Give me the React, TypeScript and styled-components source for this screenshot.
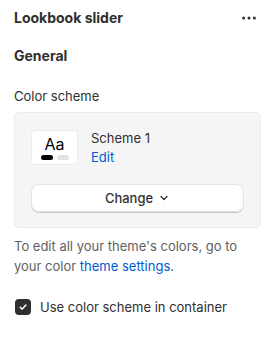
import React from "react";
import styled, { createGlobalStyle } from "styled-components";

const GlobalStyle = createGlobalStyle`
  html, body {
    margin: 0;
    padding: 0;
    background: #ffffff;
  }
  body {
    font-family: Inter, "Noto Sans", sans-serif;
    color: #303030;
    -webkit-font-smoothing: antialiased;
  }
`;

const Panel = styled.div`
  width: 275px;
  box-sizing: border-box;
  padding: 8px 14px 0 14px;
`;

const Header = styled.div`
  display: flex;
  align-items: center;
  justify-content: space-between;
  height: 20px;
`;

const Title = styled.h1`
  margin: 0;
  font-size: 14px;
  font-weight: 650;
  line-height: 20px;
`;

const MoreButton = styled.button`
  display: flex;
  align-items: center;
  justify-content: center;
  width: 14px;
  height: 20px;
  margin-right: 5px;
  padding: 0;
  border: none;
  background: none;
  color: #303030;
`;

const SectionTitle = styled.h2`
  margin: 18px 0 0 0;
  font-size: 14px;
  font-weight: 650;
  line-height: 20px;
`;

const FieldLabel = styled.div`
  margin-top: 20px;
  font-size: 13px;
  line-height: 20px;
  color: #303030;
`;

const Card = styled.div`
  margin-top: 6px;
  width: 247px;
  box-sizing: border-box;
  padding: 17px 16px 15px 16px;
  background: #f5f5f5;
  border: 1px solid #ebebeb;
  border-radius: 5px;
  display: flex;
  flex-direction: column;
  gap: 19px;
`;

const SchemeRow = styled.div`
  display: flex;
  align-items: center;
  gap: 13px;
  height: 35px;
`;

const Swatch = styled.div`
  width: 47px;
  height: 35px;
  box-sizing: border-box;
  background: #ffffff;
  border: 1px solid #ebebeb;
  border-radius: 4px;
  display: flex;
  flex-direction: column;
  align-items: center;
  justify-content: center;
  gap: 3px;
`;

const SwatchText = styled.span`
  font-size: 16px;
  line-height: 16px;
  color: #000000;
  font-weight: 420;
`;

const Pills = styled.div`
  display: flex;
  gap: 4px;
`;

const Pill = styled.span<{ $tone: string }>`
  width: 12px;
  height: 5px;
  border-radius: 3px;
  background: ${({ $tone }) => $tone};
`;

const SchemeInfo = styled.div`
  display: flex;
  flex-direction: column;
`;

const SchemeName = styled.span`
  font-size: 13px;
  line-height: 19px;
  color: #303030;
`;

const Link = styled.a`
  font-size: 13px;
  line-height: 19px;
  color: #005bd3;
  text-decoration: none;
`;

const ChangeButton = styled.button`
  display: flex;
  align-items: center;
  justify-content: center;
  gap: 5px;
  width: 100%;
  height: 28px;
  padding: 0;
  font-family: inherit;
  font-size: 13px;
  font-weight: 550;
  color: #303030;
  background: #ffffff;
  border: none;
  border-radius: 8px;
  box-shadow: 0 1px 0 0 #c8c8c8, inset 0 0 0 1px #e3e3e3;
`;

const HelpText = styled.p`
  margin: 8px 0 0 0;
  font-size: 13px;
  line-height: 20px;
  color: #616161;
`;

const InlineLink = styled.a`
  color: #005bd3;
  text-decoration: none;
`;

const CheckRow = styled.label`
  margin-top: 21px;
  display: flex;
  align-items: center;
  gap: 9px;
  font-size: 13px;
  line-height: 20px;
  color: #303030;
`;

const CheckBox = styled.span`
  width: 16px;
  height: 16px;
  margin-left: 1px;
  border-radius: 4px;
  background: #303030;
  display: flex;
  align-items: center;
  justify-content: center;
`;

export default function App() {
  return (
    <>
      <GlobalStyle />
      <Panel>
        <Header>
          <Title>Lookbook slider</Title>
          <MoreButton aria-label="More actions">
            <svg width="14" height="4" viewBox="0 0 14 4" fill="#303030">
              <circle cx="1.6" cy="2" r="1.5" />
              <circle cx="7" cy="2" r="1.5" />
              <circle cx="12.4" cy="2" r="1.5" />
            </svg>
          </MoreButton>
        </Header>
        <SectionTitle>General</SectionTitle>
        <FieldLabel>Color scheme</FieldLabel>
        <Card>
          <SchemeRow>
            <Swatch>
              <SwatchText>Aa</SwatchText>
              <Pills>
                <Pill $tone="#000000" />
                <Pill $tone="#e3e3e3" />
              </Pills>
            </Swatch>
            <SchemeInfo>
              <SchemeName>Scheme 1</SchemeName>
              <Link href="#">Edit</Link>
            </SchemeInfo>
          </SchemeRow>
          <ChangeButton>
            Change
            <svg width="12" height="12" viewBox="0 0 12 12" fill="none">
              <path d="M3 4.5 6 7.5 9 4.5" stroke="#303030" strokeWidth="1.3" strokeLinecap="round" strokeLinejoin="round" />
            </svg>
          </ChangeButton>
        </Card>
        <HelpText>
          To edit all your theme's colors, go to
          <br />
          your color <InlineLink href="#">theme settings</InlineLink>.
        </HelpText>
        <CheckRow>
          <CheckBox>
            <svg width="10" height="10" viewBox="0 0 10 10" fill="none">
              <path d="M2.2 5.2 4.2 7.1 7.9 3" stroke="#ffffff" strokeWidth="1.5" strokeLinecap="round" strokeLinejoin="round" />
            </svg>
          </CheckBox>
          Use color scheme in container
        </CheckRow>
      </Panel>
    </>
  );
}
